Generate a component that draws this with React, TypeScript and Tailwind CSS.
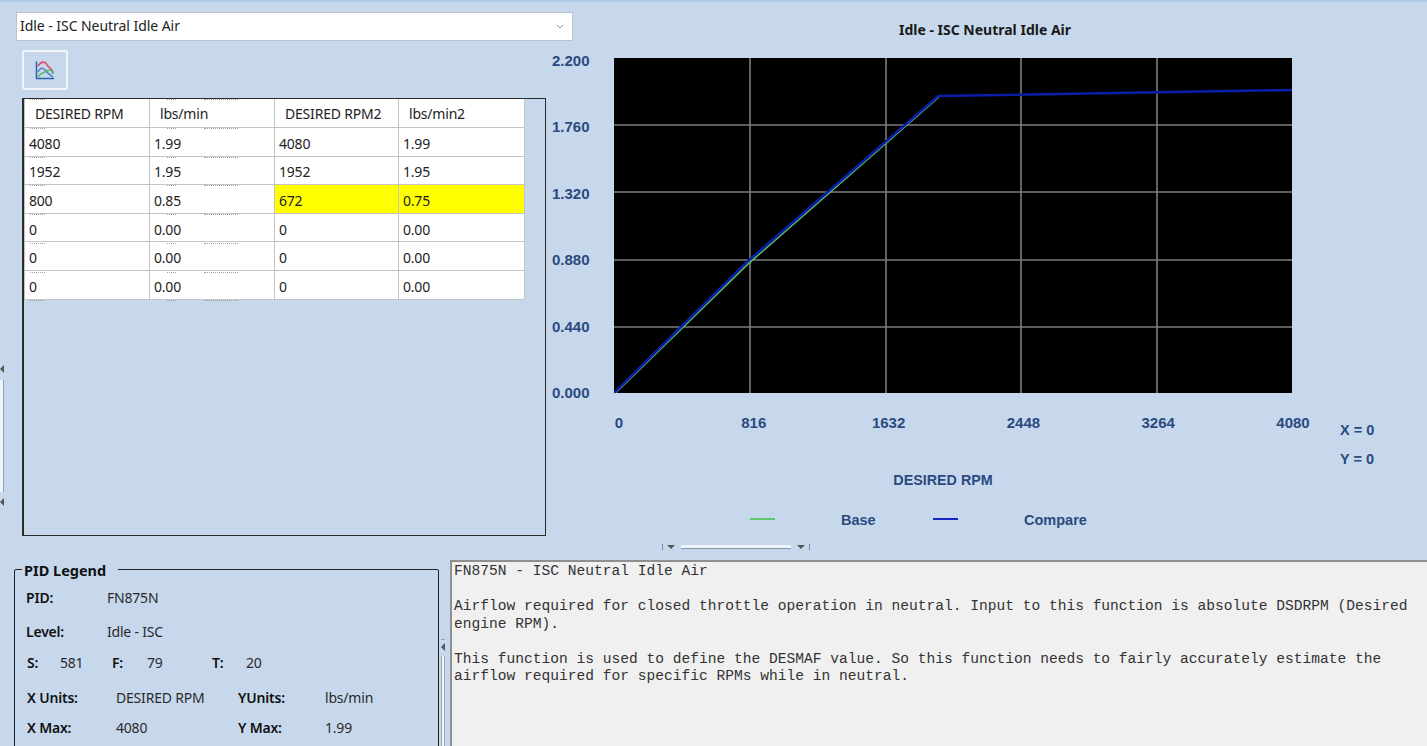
const rows = [
  ["4080", "1.99", "4080", "1.99"],
  ["1952", "1.95", "1952", "1.95"],
  ["800", "0.85", "672", "0.75"],
  ["0", "0.00", "0", "0.00"],
  ["0", "0.00", "0", "0.00"],
  ["0", "0.00", "0", "0.00"],
];
const headers = ["DESIRED RPM", "lbs/min", "DESIRED RPM2", "lbs/min2"];

const yLabels = ["2.200", "1.760", "1.320", "0.880", "0.440", "0.000"];
const xLabels = ["0", "816", "1632", "2448", "3264", "4080"];

// Leftover grid bleeding through at the row seams (top, x, width)
const seams = [0, 29, 58, 86, 115, 144, 173, 201];
const ghostBits = [
  [6, 15],
  [143, 9],
  [180, 34],
];

const PLOT_W = 678;
const PLOT_H = 335;

// Map data values to plot pixels
function toPoints(data: number[][]) {
  return data
    .map(([x, y]) => `${(x / 4080) * PLOT_W},${PLOT_H - (y / 2.2) * PLOT_H}`)
    .join(" ");
}

function GraphIcon() {
  return (
    <svg viewBox="0 0 20 20" className="w-[20px] h-[20px]" fill="none">
      <path d="M1.5 1.5V18.5H19" stroke="#2f5fa8" strokeWidth="1.5" />
      <path d="M3 6C6 1 10 1 12 5C14 8 17 8 18 13" stroke="#d8566c" strokeWidth="1.6" />
      <path d="M3 12C6 6 9 8 11 11C13 14 15 15 18 17" stroke="#4a7fc4" strokeWidth="1.4" />
      <path d="M3 17C6 12 9 13 12 11C15 9 17 10 18 14" stroke="#5cb868" strokeWidth="1.6" />
    </svg>
  );
}

function Plot() {
  return (
    <svg width={PLOT_W} height={PLOT_H} viewBox={`0 0 ${PLOT_W} ${PLOT_H}`} className="block bg-black">
      {[136, 272, 407, 543].map((x) => (
        <line key={x} x1={x} x2={x} y1={0} y2={PLOT_H} stroke="#7d7d7d" strokeWidth="1.6" />
      ))}
      {[67, 134, 202, 269].map((y) => (
        <line key={y} x1={0} x2={PLOT_W} y1={y} y2={y} stroke="#7d7d7d" strokeWidth="1.6" />
      ))}
      <polyline
        points={toPoints([[0, 0], [800, 0.85], [1952, 1.95]])}
        fill="none"
        stroke="#5fc45f"
        strokeWidth="1.6"
        transform="translate(0.6,0.8)"
      />
      <polyline
        points={toPoints([[0, 0], [800, 0.86], [1952, 1.95], [4080, 1.99]])}
        fill="none"
        stroke="#0a1ea8"
        strokeWidth="2.6"
      />
    </svg>
  );
}

function DataTable() {
  return (
    <div className="relative ml-[6px] mt-[8px] w-[524px] h-[438px] border border-[#2b2b2b] border-l-2">
      <table className="table-fixed border-collapse w-[500px] text-[14px] tracking-[-0.2px] text-[#222]">
        <colgroup>
          <col className="w-[125px]" />
          <col className="w-[125px]" />
          <col className="w-[124px]" />
          <col className="w-[126px]" />
        </colgroup>
        <thead>
          <tr className="h-[28.5px] bg-white">
            {headers.map((h) => (
              <th key={h} className="font-normal text-left pl-[10px] pt-px border border-[#c4c4c4] border-t-0">
                {h}
              </th>
            ))}
          </tr>
        </thead>
        <tbody>
          {rows.map((row, i) => (
            <tr key={i} className="h-[28.6px] bg-white">
              {row.map((cell, j) => (
                <td
                  key={j}
                  className={
                    "pl-[4px] pt-[3px] border border-[#c4c4c4] " + (i === 2 && j > 1 ? "bg-[#ffff00]" : "")
                  }
                >
                  {cell}
                </td>
              ))}
            </tr>
          ))}
        </tbody>
      </table>
      {seams.map((top) =>
        ghostBits.map(([left, width]) => (
          <div
            key={`${top}-${left}`}
            className="absolute border-t border-dotted border-[#a0a0a0]"
            style={{ top, left, width }}
          />
        ))
      )}
    </div>
  );
}

function Legend() {
  const label = "font-semibold text-[#111]";
  return (
    <fieldset className="ml-[14px] w-[425px] h-[220px] shrink-0 border border-[#222] rounded-[2px] pl-[11px] text-[14px] tracking-[-0.2px] text-[#2a2a2a]">
      <legend className="-ml-[4px] pl-[2px] pr-[12px] pt-px font-bold text-[14.5px] tracking-normal leading-[18px] text-[#111]">
        PID Legend
      </legend>
      <div className="flex h-[34px] items-center mt-[1px]">
        <span className={label + " w-[81px]"}>PID:</span>
        <span>FN875N</span>
      </div>
      <div className="flex h-[34px] items-center">
        <span className={label + " w-[81px]"}>Level:</span>
        <span>Idle - ISC</span>
      </div>
      <div className="flex h-[28px] items-center pl-px">
        <span className={label + " w-[33px]"}>S:</span>
        <span className="w-[52px]">581</span>
        <span className={label + " w-[35px]"}>F:</span>
        <span className="w-[65px]">79</span>
        <span className={label + " w-[34px]"}>T:</span>
        <span>20</span>
      </div>
      <div className="flex h-[42px] items-center pl-px">
        <span className={label + " w-[89px]"}>X Units:</span>
        <span className="w-[122px]">DESIRED RPM</span>
        <span className={label + " w-[87px]"}>YUnits:</span>
        <span>lbs/min</span>
      </div>
      <div className="flex h-[18px] items-center pl-px">
        <span className={label + " w-[89px]"}>X Max:</span>
        <span className="w-[122px]">4080</span>
        <span className={label + " w-[87px]"}>Y Max:</span>
        <span>1.99</span>
      </div>
    </fieldset>
  );
}

export default function App() {
  return (
    <div className="relative w-[1427px] h-[746px] overflow-hidden bg-[#c7d8ec] border-t-2 border-[#b3cbeb] font-['Noto_Sans',sans-serif]">
      <div className="flex h-[558px]">
        {/* Left - selector, graph button, table */}
        <div className="w-[548px] shrink-0 pl-[16px] pt-[10px]">
          <div className="w-[557px] h-[29px] flex items-center justify-between bg-white border border-[#b9c3cf] pl-[3px] pr-[8px] text-[14px] tracking-[-0.05px] text-[#222]">
            <span className="-mt-[2px]">Idle - ISC Neutral Idle Air</span>
            <svg viewBox="0 0 10 6" className="w-[8px] h-[5px]" fill="none">
              <path d="M1 1L5 5L9 1" stroke="#777" strokeWidth="1" />
            </svg>
          </div>
          <button className="ml-[6px] mt-[9px] w-[46px] h-[40px] flex items-center justify-center border-2 border-[#f2f6fb] rounded-[3px]">
            <GraphIcon />
          </button>
          <DataTable />
        </div>

        {/* Right - chart */}
        <div className="flex-1 text-[#2b4a80] font-bold font-['Liberation_Sans',sans-serif]">
          <div className="w-[874px] text-center mt-[18px] h-[20px] leading-[20px] text-[14px] text-[#1a1a1a] font-['Noto_Sans',sans-serif]">
            Idle - ISC Neutral Idle Air
          </div>
          <div className="flex mt-[11px] text-[15px]">
            <div className="ml-[4px] w-[62px] h-[352px] flex flex-col justify-between">
              {yLabels.map((l) => (
                <div key={l} className="h-[20px] leading-[20px]">
                  {l}
                </div>
              ))}
            </div>
            <div className="mt-[7px]">
              <Plot />
            </div>
          </div>
          <div className="flex mt-[10px] h-[57px] text-[15px]">
            <div className="ml-[71px] w-[674px] h-[20px] leading-[20px] flex justify-between">
              {xLabels.map((l) => (
                <div key={l} className="w-0 flex justify-center">
                  {l}
                </div>
              ))}
            </div>
            <div className="ml-[47px] mt-[3px] text-[14.5px] leading-[29px]">
              <div>X = 0</div>
              <div>Y = 0</div>
            </div>
          </div>
          <div className="ml-[395px] w-0 flex justify-center whitespace-nowrap h-[20px] leading-[20px] text-[14.3px]">
            DESIRED RPM
          </div>
          <div className="flex items-center ml-[202px] mt-[21px] h-[20px] text-[14.5px]">
            <div className="w-[25px] h-[2px] -mt-[4px] bg-[#5fc86f]" />
            <span className="ml-[66px] w-[92px]">Base</span>
            <div className="w-[25px] h-[2px] -mt-[4px] bg-[#1426c0]" />
            <span className="ml-[66px]">Compare</span>
          </div>
        </div>
      </div>

      {/* Bottom - legend and description */}
      <div className="flex h-[186px] items-start">
        <Legend />
        <div className="ml-[11px] flex-1 h-[190px] bg-[#f0f0f0] border-l-2 border-t-2 border-[#8f8f8f] pl-[2px] pt-[1px] font-['Liberation_Mono',monospace] text-[14.58px] leading-[17.5px] text-[#333] whitespace-pre-wrap">
          {`FN875N - ISC Neutral Idle Air

Airflow required for closed throttle operation in neutral. Input to this function is absolute DSDRPM (Desired
engine RPM).

This function is used to define the DESMAF value. So this function needs to fairly accurately estimate the
airflow required for specific RPMs while in neutral.`}
        </div>
      </div>

      {/* Splitter handles */}
      <div className="absolute left-[662px] top-[542px] flex items-center gap-[4px]">
        <div className="w-px h-[6px] bg-[#8a8a8a]" />
        <div className="w-0 h-0 border-x-[4px] border-x-transparent border-t-[4px] border-t-[#555]" />
        <div className="w-[110px] h-[4px] bg-[#eef4fb] border-b border-[#8d97a3] mx-[2px]" />
        <div className="w-0 h-0 border-x-[4px] border-x-transparent border-t-[4px] border-t-[#555]" />
        <div className="w-px h-[6px] bg-[#8a8a8a]" />
      </div>
      <div className="absolute left-0 top-[360px] w-[5px] h-[146px] flex flex-col items-start">
        <div className="w-0 h-0 mt-[3px] border-y-[4px] border-y-transparent border-r-[4px] border-r-[#555]" />
        <div className="w-[4px] h-[112px] mt-[7px] bg-[#eef4fb] border-r border-[#9aa4b0]" />
        <div className="w-0 h-0 mt-[6px] border-y-[4px] border-y-transparent border-r-[4px] border-r-[#555]" />
      </div>
      <div className="absolute left-[441px] top-[637px] w-[5px] h-[110px] flex flex-col items-start">
        <div className="w-[4px] h-px bg-[#9aa4b0]" />
        <div className="w-0 h-0 mt-[3px] border-y-[4px] border-y-transparent border-r-[4px] border-r-[#555]" />
        <div className="w-[4px] flex-1 mt-[5px] bg-[#eef4fb] border-x border-[#9aa4b0]" />
      </div>
    </div>
  );
}
